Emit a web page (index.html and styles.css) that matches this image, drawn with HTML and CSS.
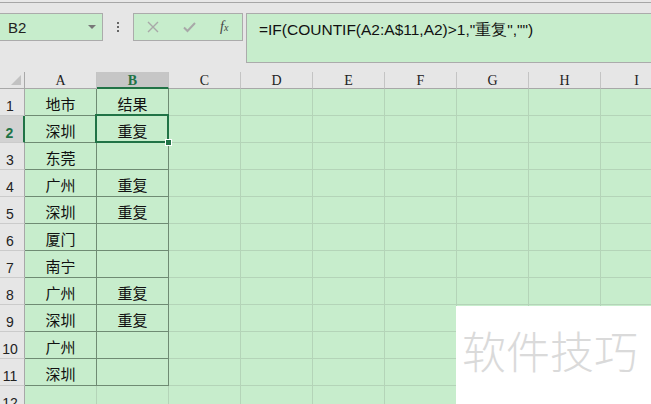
FILE: index.html
```html
<!DOCTYPE html>
<html>
<head>
    <title>重复值</title>
    <link rel="stylesheet" href="styles.css">
</head>
<body>

<div class="topline"></div>
<div class="toolbar">
    <div class="namebox">
        <span class="name">B2</span>
        <span class="arrow"></span>
    </div>
    <div class="dots"><i></i><i></i><i></i></div>
    <div class="btnbox">
        <svg class="ico" width="12" height="12" viewBox="0 0 12 12"><path d="M1 1 L11 11 M11 1 L1 11" stroke="#a8a8a8" stroke-width="1.4" fill="none"/></svg>
        <svg class="ico" width="13" height="12" viewBox="0 0 13 12"><path d="M1 6.5 L4.5 10 L12 2" stroke="#a8a8a8" stroke-width="2" fill="none"/></svg>
        <span class="fx">f<sub>x</sub></span>
    </div>
    <div class="formula">=IF(COUNTIF(A2:A$11,A2)&gt;1,"重复","")</div>
</div>

<div class="sheet">
    <div class="grid">
        <div class="corner"><span class="tri"></span></div>
        <div class="ch">A</div><div class="ch on">B</div><div class="ch">C</div><div class="ch">D</div><div class="ch">E</div><div class="ch">F</div><div class="ch">G</div><div class="ch">H</div><div class="ch">I</div>

        <div class="rh">1</div><div class="c t top">地市</div><div class="c t top">结果</div><div class="c"></div><div class="c"></div><div class="c"></div><div class="c"></div><div class="c"></div><div class="c"></div><div class="c"></div>
        <div class="rh on">2</div><div class="c t">深圳</div><div class="c t sel">重复</div><div class="c"></div><div class="c"></div><div class="c"></div><div class="c"></div><div class="c"></div><div class="c"></div><div class="c"></div>
        <div class="rh">3</div><div class="c t">东莞</div><div class="c t"></div><div class="c"></div><div class="c"></div><div class="c"></div><div class="c"></div><div class="c"></div><div class="c"></div><div class="c"></div>
        <div class="rh">4</div><div class="c t">广州</div><div class="c t">重复</div><div class="c"></div><div class="c"></div><div class="c"></div><div class="c"></div><div class="c"></div><div class="c"></div><div class="c"></div>
        <div class="rh">5</div><div class="c t">深圳</div><div class="c t">重复</div><div class="c"></div><div class="c"></div><div class="c"></div><div class="c"></div><div class="c"></div><div class="c"></div><div class="c"></div>
        <div class="rh">6</div><div class="c t">厦门</div><div class="c t"></div><div class="c"></div><div class="c"></div><div class="c"></div><div class="c"></div><div class="c"></div><div class="c"></div><div class="c"></div>
        <div class="rh">7</div><div class="c t">南宁</div><div class="c t"></div><div class="c"></div><div class="c"></div><div class="c"></div><div class="c"></div><div class="c"></div><div class="c"></div><div class="c"></div>
        <div class="rh">8</div><div class="c t">广州</div><div class="c t">重复</div><div class="c"></div><div class="c"></div><div class="c"></div><div class="c"></div><div class="c"></div><div class="c"></div><div class="c"></div>
        <div class="rh">9</div><div class="c t">深圳</div><div class="c t">重复</div><div class="c"></div><div class="c"></div><div class="c"></div><div class="c"></div><div class="c"></div><div class="c"></div><div class="c"></div>
        <div class="rh">10</div><div class="c t">广州</div><div class="c t"></div><div class="c"></div><div class="c"></div><div class="c"></div><div class="c"></div><div class="c"></div><div class="c"></div><div class="c"></div>
        <div class="rh">11</div><div class="c t">深圳</div><div class="c t"></div><div class="c"></div><div class="c"></div><div class="c"></div><div class="c"></div><div class="c"></div><div class="c"></div><div class="c"></div>
        <div class="rh">12</div><div class="c"></div><div class="c"></div><div class="c"></div><div class="c"></div><div class="c"></div><div class="c"></div><div class="c"></div><div class="c"></div><div class="c"></div>
    </div>

    <div class="watermark">软件技巧</div>
</div>

</body>
</html>
```

FILE: styles.css
```css
body {
    margin: 0;
    width: 651px;
    height: 404px;
    overflow: hidden;
    background: #e6e6e6;
    font-family: 'Liberation Sans', sans-serif;
}

.topline {
    height: 2px;
    background: #e8e8e8;
    border-bottom: 1px solid #a6a6a6;
}

.toolbar {
    display: flex;
    align-items: flex-start;
    height: 59px;
    padding-top: 10px;
}

.namebox {
    box-sizing: border-box;
    width: 103px;
    height: 28px;
    background: #c7edcc;
    border: 1px solid #ababab;
    border-left: none;
    display: flex;
    align-items: center;
    justify-content: space-between;
    padding: 0 6px 0 8px;
}

.name {
    font-size: 15px;
    color: #222;
}

.arrow {
    width: 0;
    height: 0;
    border-left: 4px solid transparent;
    border-right: 4px solid transparent;
    border-top: 4px solid #777;
}

.dots {
    width: 30px;
    height: 28px;
    display: flex;
    flex-direction: column;
    align-items: center;
    justify-content: center;
    gap: 2px;
}

.dots i {
    width: 2px;
    height: 2px;
    background: #666;
}

.btnbox {
    box-sizing: border-box;
    width: 110px;
    height: 28px;
    background: #c7edcc;
    border: 1px solid #ababab;
    display: flex;
    align-items: center;
    padding-left: 13px;
}

.ico {
    margin-right: 24px;
}

.fx {
    font-family: 'Liberation Serif', serif;
    font-style: italic;
    font-size: 14px;
    color: #444;
    margin-left: 0;
}

.fx sub {
    font-size: 10px;
    vertical-align: 0;
}

.formula {
    box-sizing: border-box;
    flex: 1;
    margin-left: 3px;
    height: 50px;
    background: #c7edcc;
    border: 1px solid #ababab;
    border-right: none;
    padding: 6px 0 0 12px;
    font-size: 15.5px;
    color: #111;
}

.sheet {
    position: relative;
    height: 332px;
    overflow: hidden;
}

.grid {
    display: grid;
    grid-template-columns: 25px repeat(9, 72px);
    grid-template-rows: 17px repeat(12, 27px);
}

.corner,
.ch,
.rh,
.c {
    box-sizing: border-box;
}

.corner {
    background: #e6e6e6;
    border-right: 1px solid #a8a8a8;
    border-bottom: 1px solid #a8a8a8;
    position: relative;
}

.tri {
    position: absolute;
    right: 3px;
    bottom: 3px;
    width: 0;
    height: 0;
    border-left: 10px solid transparent;
    border-bottom: 10px solid #c2c2c2;
}

.ch {
    background: #e6e6e6;
    border-right: 1px solid #c4c4c4;
    border-bottom: 1px solid #a8a8a8;
    font-family: 'Liberation Serif', serif;
    font-size: 14px;
    color: #222;
    text-align: center;
    line-height: 18px;
}

.ch.on {
    background: #c6c6c6;
    color: #217346;
    font-weight: bold;
    border-bottom: 2px solid #217346;
}

.rh {
    background: #e6e6e6;
    border-right: 1px solid #a8a8a8;
    border-bottom: 1px solid #cbcbcb;
    font-size: 14px;
    color: #222;
    display: flex;
    align-items: flex-end;
    justify-content: center;
    padding: 0 4px 1px 0;
}

.rh.on {
    background: #d2d2d2;
    color: #217346;
    font-weight: bold;
    border-right: 2px solid #217346;
}

.c {
    background: #c7edcc;
    border-right: 1px solid #b4d4b8;
    border-bottom: 1px solid #b4d4b8;
    display: flex;
    align-items: center;
    justify-content: center;
    padding-top: 2px;
    font-family: 'Noto Sans CJK SC', sans-serif;
    font-size: 15px;
    color: #111;
}

.c.t {
    border-right-color: #6f8b73;
    border-bottom-color: #6f8b73;
}

.c.sel {
    position: relative;
    z-index: 2;
}

.c.sel::before {
    content: "";
    position: absolute;
    top: -2px;
    left: -2px;
    right: -1px;
    bottom: -1px;
    border: 2px solid #217346;
}

.c.sel::after {
    content: "";
    position: absolute;
    right: -4px;
    bottom: -4px;
    width: 5px;
    height: 5px;
    background: #217346;
    border: 1px solid #ffffff;
}

.watermark {
    position: absolute;
    left: 456px;
    top: 234px;
    width: 195px;
    height: 98px;
    background: #ffffff;
    box-sizing: border-box;
    padding: 14px 0 0 6px;
    font-family: 'Noto Sans CJK SC', sans-serif;
    font-weight: 300;
    font-size: 44px;
    line-height: 60px;
    color: #dadada;
    white-space: nowrap;
}
```
